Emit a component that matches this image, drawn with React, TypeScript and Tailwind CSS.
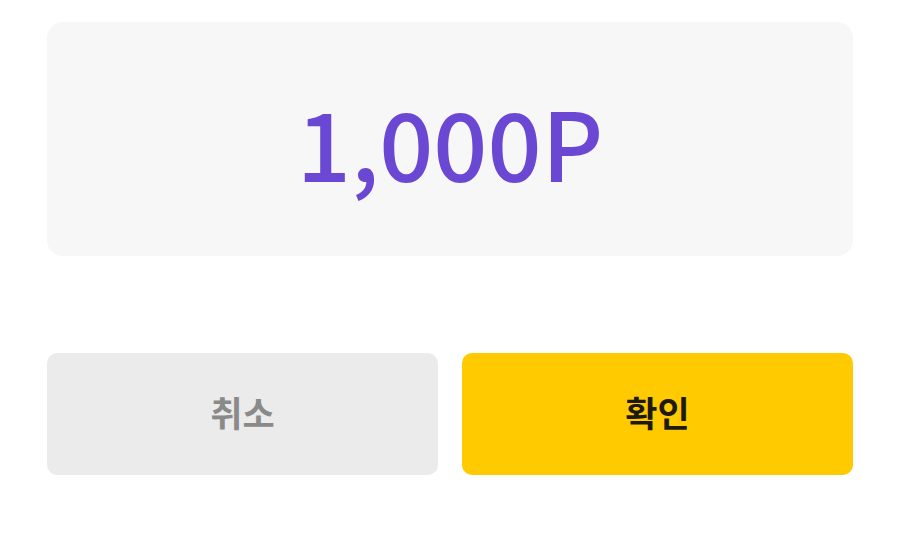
import React from 'react';

export default function App() {
  return (
    <div
      className="w-[900px] h-[538px] bg-white px-[47px] pt-[22px]"
      style={{ fontFamily: '"Noto Sans CJK KR", "Noto Sans", sans-serif' }}
    >
      <div className="h-[234px] rounded-[16px] bg-[#f7f7f7] flex items-center justify-center">
        <span className="text-[95px] font-medium leading-none text-[#6b48d4] mt-[2px]">1,000P</span>
      </div>

      <div className="mt-[97px] grid grid-cols-2 gap-[24px]">
        <button className="h-[122px] rounded-[10px] bg-[#ebebeb] text-[35px] font-bold text-[#8a8a8a] pb-[4px]">
          취소
        </button>
        <button className="h-[122px] rounded-[10px] bg-[#ffcb00] text-[35px] font-bold text-[#1e1a10] pb-[4px]">
          확인
        </button>
      </div>
    </div>
  );
}
